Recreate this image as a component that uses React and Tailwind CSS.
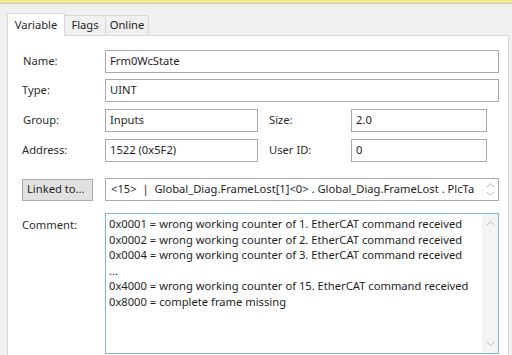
import React from 'react';

const font = { fontFamily: '"Noto Sans", "Open Sans", sans-serif' };

const Field = ({ value, className = '' }) => (
  <div
    className={`h-[23px] border border-[#a9a9a9] bg-white pl-[4px] flex items-center text-[#1e1e1e] whitespace-nowrap overflow-hidden ${className}`}
  >
    {value}
  </div>
);

const Label = ({ children, className = '' }) => (
  <div className={`text-[#2b2b2b] ${className}`}>{children}</div>
);

const Chevron = ({ up }) => (
  <svg width="9" height="6" viewBox="0 0 9 6" className="text-[#b8b8b8]">
    <path d={up ? 'M1 5 L4.5 1.5 L8 5' : 'M1 1 L4.5 4.5 L8 1'} fill="none" stroke="currentColor" strokeWidth="1" />
  </svg>
);

const comment = [
  '0x0001 = wrong working counter of 1. EtherCAT command received',
  '0x0002 = wrong working counter of 2. EtherCAT command received',
  '0x0004 = wrong working counter of 3. EtherCAT command received',
  '...',
  '0x4000 = wrong working counter of 15. EtherCAT command received',
  '0x8000 = complete frame missing',
];

export default function App() {
  return (
    <div className="w-[512px] h-[355px] bg-[#f0f0f0] flex flex-col overflow-hidden text-[11.2px]" style={font}>
      {/* window top edge */}
      <div className="h-[3px] bg-[#f6e88f]" />
      <div className="h-[1px] bg-[#c8c8c8]" />

      {/* Tabs */}
      <div className="h-[31px] flex items-end pl-[7px]">
        <div className="h-[23px] w-[58px] bg-white border border-b-0 border-[#d9d9d9] flex items-center justify-center text-[#1e1e1e] relative top-[1px]">
          Variable
        </div>
        <div className="h-[20px] w-[41px] bg-[#f0f0f0] border-t border-r border-[#d9d9d9] flex items-center justify-center text-[#1e1e1e]">
          Flags
        </div>
        <div className="h-[20px] w-[43px] bg-[#f0f0f0] border-t border-r border-[#d9d9d9] flex items-center justify-center text-[#1e1e1e]">
          Online
        </div>
      </div>

      {/* Tab page */}
      <div className="flex-1 ml-[7px] mr-[3px] bg-white border-l border-t border-r border-[#d9d9d9] pt-[14px] pl-[14px]">
        <div className="flex items-center">
          <Label className="w-[83px] pl-[1px]">Name:</Label>
          <Field value="Frm0WcState" className="w-[394px]" />
        </div>
        <div className="flex items-center mt-[6px]">
          <Label className="w-[83px]">Type:</Label>
          <Field value="UINT" className="w-[394px]" />
        </div>
        <div className="flex items-center mt-[7px]">
          <Label className="w-[83px] pl-[1px]">Group:</Label>
          <Field value="Inputs" className="w-[153px]" />
          <Label className="w-[93px] pl-[11px]">Size:</Label>
          <Field value="2.0" className="w-[136px]" />
        </div>
        <div className="flex items-center mt-[7px]">
          <Label className="w-[83px]">Address:</Label>
          <Field value="1522 (0x5F2)" className="w-[153px]" />
          <Label className="w-[93px] pl-[11px]">User ID:</Label>
          <Field value="0" className="w-[136px]" />
        </div>
        <div className="flex items-center mt-[16px]">
          <div className="w-[83px]">
            <div className="w-[71px] h-[22px] bg-[#e1e1e1] border border-[#adadad] flex items-center pl-[4px] text-[#1e1e1e]">
              Linked to...
            </div>
          </div>
          <div className="w-[394px] h-[23px] border border-[#a9a9a9] bg-white flex items-center">
            <div className="flex-1 pl-[5px] whitespace-nowrap overflow-hidden text-[#1e1e1e]">
              &lt;15&gt;&nbsp; |&nbsp; Global_Diag.FrameLost[1]&lt;0&gt; . Global_Diag.FrameLost . PlcTa
            </div>
            <div className="w-[16px] flex flex-col items-center gap-[3px]">
              <Chevron up />
              <Chevron />
            </div>
          </div>
        </div>
        <div className="flex mt-[12px]">
          <Label className="w-[83px] pt-[4px]">Comment:</Label>
          <div className="w-[394px] h-[141px] border border-[#7fb8dc] bg-white flex">
            <div className="flex-1 pl-[3px] pt-[2px] leading-[15.6px] text-[#1e1e1e] whitespace-nowrap overflow-hidden">
              {comment.map((line, i) => (
                <div key={i}>{line}</div>
              ))}
            </div>
            <div className="w-[16px] bg-[#f4f4f4] flex flex-col items-center justify-between py-[6px]">
              <Chevron up />
              <Chevron />
            </div>
          </div>
        </div>
      </div>
    </div>
  );
}
